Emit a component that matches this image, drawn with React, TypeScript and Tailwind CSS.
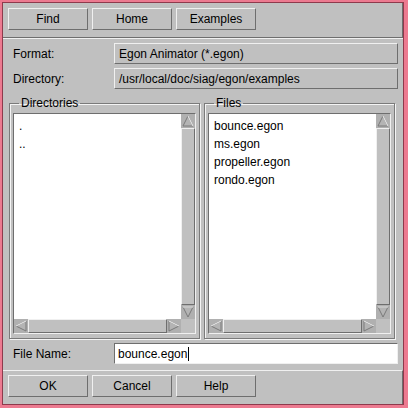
import React from 'react';

const raised = 'border border-t-[#f0f0f0] border-l-[#f0f0f0] border-b-[#6e6e6e] border-r-[#6e6e6e]';
const sunken = 'border border-t-[#6e6e6e] border-l-[#6e6e6e] border-b-[#f0f0f0] border-r-[#f0f0f0]';

const Arrow = ({ dir }: { dir: 'up' | 'down' | 'left' | 'right' }) => {
  const pts = {
    up: '7,2 12,12 2,12',
    down: '2,2 12,2 7,12',
    left: '2,7 12,2 12,12',
    right: '2,2 12,7 2,12',
  }[dir];
  return (
    <svg width="14" height="14" viewBox="0 0 14 14" className="block">
      <polygon points={pts} fill="#b4b4b4" stroke="#7a7a7a" strokeWidth="1" />
      <polyline points={pts.split(' ').slice(0, 2).join(' ')} fill="none" stroke="#f4f4f4" strokeWidth="1" />
    </svg>
  );
};

const Button = ({ label }: { label: string }) => (
  <button className={`w-[80px] h-[22px] ${raised} bg-[#c0c0c0] text-[12px] text-black`}>{label}</button>
);

const ListPanel = ({ title, items }: { title: string; items: string[] }) => (
  <fieldset className="flex-1 border border-[#7a7a7a] shadow-[inset_1px_1px_0_#f4f4f4,1px_1px_0_#f4f4f4] px-[3px] pb-[4px] min-w-0">
    <legend className="ml-[6px] px-[2px] text-[12px] leading-[12px]">{title}</legend>
    <div className={`mt-[4px] ${sunken} flex flex-col`}>
      <div className="flex h-[205px]">
        <div className="flex-1 bg-white pl-[5px] pt-[3px] text-[12px] leading-[18px]">
          {items.map((it) => (
            <div key={it}>{it}</div>
          ))}
        </div>
        <div className="w-[14px] flex flex-col bg-[#b0b0b0]">
          <div className="h-[14px]"><Arrow dir="up" /></div>
          <div className={`flex-1 ${raised} bg-[#c0c0c0]`} />
          <div className="h-[14px]"><Arrow dir="down" /></div>
        </div>
      </div>
      <div className="flex h-[14px]">
        <div className="flex-1 flex bg-[#b0b0b0]">
          <div className="w-[14px]"><Arrow dir="left" /></div>
          <div className={`flex-1 ${raised} bg-[#c0c0c0]`} />
          <div className="w-[14px]"><Arrow dir="right" /></div>
        </div>
        <div className="w-[14px] bg-[#c0c0c0]" />
      </div>
    </div>
  </fieldset>
);

export default function App() {
  return (
    <div className="w-[408px] h-[408px] bg-[#ec7a90] pl-[2px] pt-[2px] pr-[4px] pb-[3px] font-['Liberation_Sans',Arial,sans-serif] text-black">
      <div className="w-full h-full border border-[#8e3a4c] bg-[#c0c0c0] flex flex-col">
        {/* top buttons */}
        <div className="h-[35px] border-b border-b-[#6e6e6e] border-r border-r-[#6e6e6e] flex gap-[4px] pl-[5px] pt-[5px]">
          <Button label="Find" />
          <Button label="Home" />
          <Button label="Examples" />
        </div>

        <div className="flex-1 flex flex-col border-t border-t-[#f0f0f0] px-[5px] pt-[4px]">
          <div className="flex items-center h-[21px] text-[12px]">
            <span className="w-[106px] pl-[5px]">Format:</span>
            <div className={`flex-1 h-[21px] ${raised} pl-[4px] flex items-center`}>Egon Animator (*.egon)</div>
          </div>
          <div className="flex items-center h-[21px] mt-[4px] text-[12px]">
            <span className="w-[106px] pl-[5px]">Directory:</span>
            <div className={`flex-1 h-[21px] ${raised} pl-[4px] flex items-center`}>/usr/local/doc/siag/egon/examples</div>
          </div>

          <div className="flex gap-[4px] mt-[8px] pl-[1px] pr-[3px]">
            <ListPanel title="Directories" items={['.', '..']} />
            <ListPanel title="Files" items={['bounce.egon', 'ms.egon', 'propeller.egon', 'rondo.egon']} />
          </div>

          <div className="flex items-center mt-[4px] text-[12px]">
            <span className="w-[106px] pl-[5px]">File Name:</span>
            <div className={`flex-1 h-[21px] bg-white ${sunken} pl-[3px] flex items-center`}>
              bounce.egon<span className="w-[1px] h-[14px] bg-black ml-[1px]" />
            </div>
          </div>
        </div>

        {/* bottom buttons */}
        <div className="h-[34px] border-t border-t-[#f0f0f0] border-r border-r-[#6e6e6e] flex gap-[4px] pl-[5px] pt-[4px]">
          <Button label="OK" />
          <Button label="Cancel" />
          <Button label="Help" />
        </div>
      </div>
    </div>
  );
}
